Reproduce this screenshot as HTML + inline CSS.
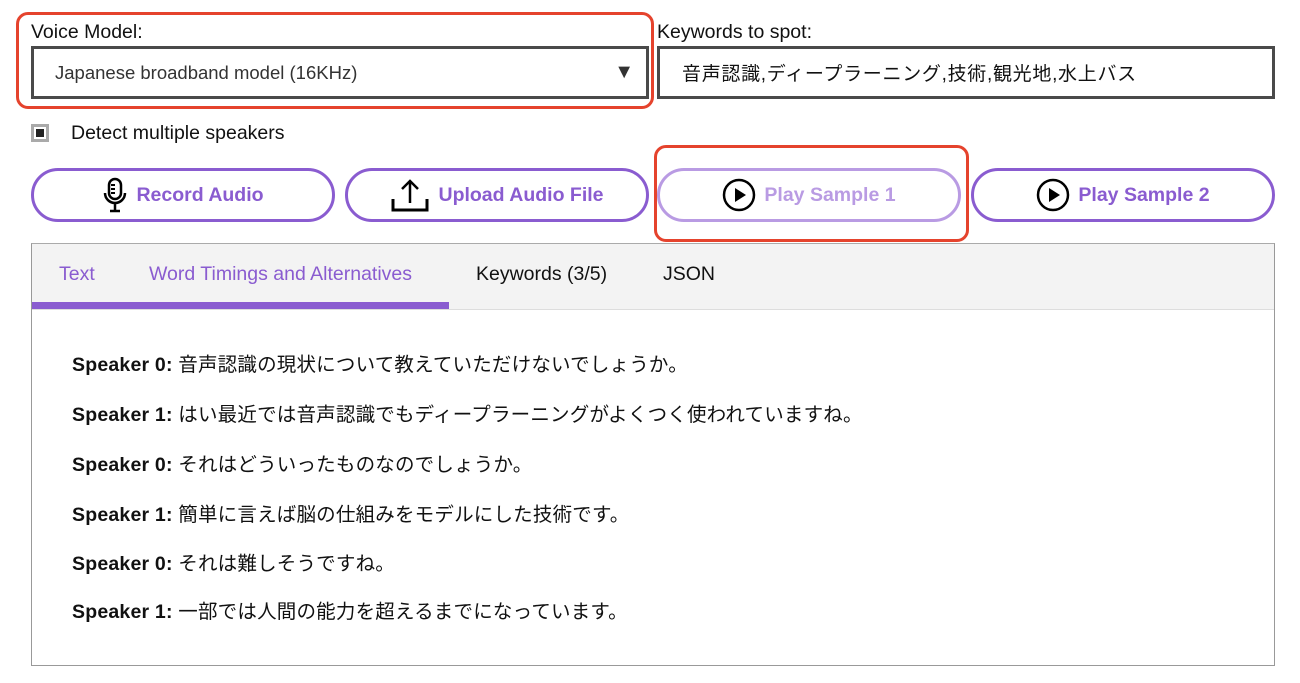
<!DOCTYPE html>
<html><head><meta charset="utf-8"><style>
*{box-sizing:border-box;margin:0;padding:0}
body{width:1300px;height:683px;background:#fff;font-family:"Liberation Sans","Noto Sans CJK JP",sans-serif;color:#111;position:relative;overflow:hidden}
.abs{position:absolute}
.red{border:3px solid #e5432d;border-radius:12px}
.lbl{font-size:19.5px}
.box{border:3px solid #4a4a4a;background:#fff;font-size:19px;display:flex;align-items:center}
.btn{top:168px;height:54px;width:304px;border:3px solid #8a5cd0;border-radius:27px;display:flex;align-items:center;justify-content:center;color:#8a5cd0;font-size:19.5px;font-weight:bold;gap:8px}
.line{position:absolute;left:72px;font-size:19.5px;letter-spacing:0.2px}
.line b{font-weight:bold}
</style></head><body>
<div class="abs red" style="left:16px;top:12px;width:638px;height:97px"></div>
<div class="abs lbl" style="left:31px;top:21px">Voice Model:</div>
<div class="abs box" style="left:31px;top:46px;width:618px;height:53px;padding-left:21px;color:#333;font-size:18.5px">Japanese broadband model (16KHz)<span style="position:absolute;right:12px;font-size:20px;color:#333">▼</span></div>
<div class="abs lbl" style="left:657px;top:21px">Keywords to spot:</div>
<div class="abs box" style="left:657px;top:46px;width:618px;height:53px;padding-left:22px;letter-spacing:0.7px">音声認識,ディープラーニング,技術,観光地,水上バス</div>
<div class="abs" style="left:31px;top:124px;width:18px;height:18px;border:3px solid #aaa;background:#fff"><div style="margin:2px;width:8px;height:8px;background:#222"></div></div>
<div class="abs" style="left:71px;top:122px;font-size:19.5px">Detect multiple speakers</div>

<div class="abs btn" style="left:31px"><svg width="26" height="36" viewBox="0 0 26 36"><rect x="7" y="2" width="12" height="20" rx="6" fill="none" stroke="#000" stroke-width="2.5"/><path d="M9 8h4M9 12h4M9 16h4" stroke="#000" stroke-width="2"/><path d="M3 16a10 10 0 0 0 20 0M13 26v7M8 34h10" fill="none" stroke="#000" stroke-width="2.5"/></svg>Record Audio</div>
<div class="abs btn" style="left:345px"><svg width="40" height="36" viewBox="0 0 40 36"><path d="M20 26V4M12 12l8-8 8 8" fill="none" stroke="#000" stroke-width="2.5"/><path d="M3 22v11h34V22" fill="none" stroke="#000" stroke-width="3"/></svg>Upload Audio File</div>
<div class="abs red" style="left:654px;top:145px;width:315px;height:97px"></div>
<div class="abs btn" style="left:657px;border-color:#b99be3;color:#b99be3"><svg width="34" height="34" viewBox="0 0 34 34"><circle cx="17" cy="17" r="15" fill="none" stroke="#000" stroke-width="2.5"/><path d="M13 10l11 7-11 7z" fill="#000"/></svg>Play Sample 1</div>
<div class="abs btn" style="left:971px"><svg width="34" height="34" viewBox="0 0 34 34"><circle cx="17" cy="17" r="15" fill="none" stroke="#000" stroke-width="2.5"/><path d="M13 10l11 7-11 7z" fill="#000"/></svg>Play Sample 2</div>

<div class="abs" style="left:31px;top:243px;width:1244px;height:423px;border:1px solid #999;border-top-color:#aaa">
 <div style="height:66px;background:#f3f3f3;border-bottom:1px solid #ddd;position:relative;font-size:19.5px">
  <span class="abs" style="left:27px;top:19px;color:#8a5cd0">Text</span>
  <span class="abs" style="left:117px;top:19px;color:#8a5cd0">Word Timings and Alternatives</span>
  <span class="abs" style="left:444px;top:19px">Keywords (3/5)</span>
  <span class="abs" style="left:631px;top:19px">JSON</span>
  <div class="abs" style="left:0;top:58px;width:417px;height:7px;background:#8a5cd0"></div>
 </div>
</div>
<div class="line" style="top:348px"><b>Speaker 0:</b> 音声認識の現状について教えていただけないでしょうか。</div>
<div class="line" style="top:398px"><b>Speaker 1:</b> はい最近では音声認識でもディープラーニングがよくつく使われていますね。</div>
<div class="line" style="top:448px"><b>Speaker 0:</b> それはどういったものなのでしょうか。</div>
<div class="line" style="top:498px"><b>Speaker 1:</b> 簡単に言えば脳の仕組みをモデルにした技術です。</div>
<div class="line" style="top:547px"><b>Speaker 0:</b> それは難しそうですね。</div>
<div class="line" style="top:595px"><b>Speaker 1:</b> 一部では人間の能力を超えるまでになっています。</div>
</body></html>
